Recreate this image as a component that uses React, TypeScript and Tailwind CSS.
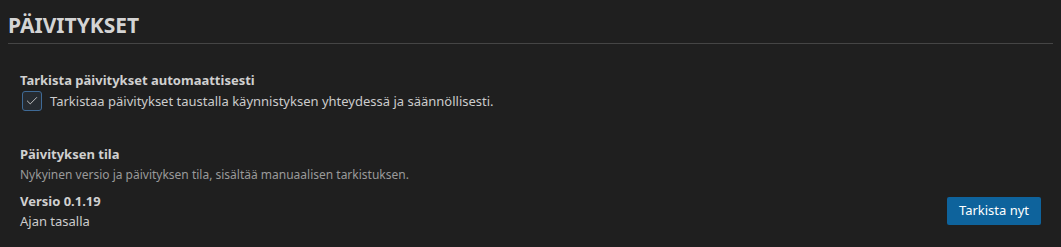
import { Check } from "lucide-react";

export default function App() {
  return (
    <div className="min-h-[247px] w-full bg-[#1f1f1f] px-2 pt-[11px] text-[#cccccc] [font-family:'Noto_Sans',sans-serif]">
      <h2 className="border-b border-[#454545] pb-1 text-[21px] font-bold leading-[28px] text-[#d4d4d4]">
        PÄIVITYKSET
      </h2>

      <div className="px-3">
        <section className="mt-[26px]">
          <div className="text-[13px] font-bold leading-5 text-[#d0d0d0]">
            Tarkista päivitykset automaattisesti
          </div>
          <label className="mt-px flex items-center gap-2 text-[13px] leading-5">
            <span className="ml-0.5 grid h-5 w-5 place-items-center rounded-[3px] border border-[#3f6a96] bg-[#262b31] text-[#c8c8c8]">
              <Check size={14} strokeWidth={1.6} />
            </span>
            Tarkistaa päivitykset taustalla käynnistyksen yhteydessä ja säännöllisesti.
          </label>
        </section>

        <section className="mt-[33px]">
          <div className="text-[13px] font-bold leading-5 text-[#d0d0d0]">Päivityksen tila</div>
          <div className="mt-px text-[12px] leading-5 text-[#9a9a9a]">
            Nykyinen versio ja päivityksen tila, sisältää manuaalisen tarkistuksen.
          </div>
          <div className="mt-[6px] flex items-center justify-between">
            <div className="text-[13px] leading-5">
              <div className="font-bold text-[#d0d0d0]">Versio 0.1.19</div>
              <div>Ajan tasalla</div>
            </div>
            <button className="h-7 w-[94px] rounded-[2px] bg-[#0e639c] text-[13px] text-white">
              Tarkista nyt
            </button>
          </div>
        </section>
      </div>
    </div>
  );
}
